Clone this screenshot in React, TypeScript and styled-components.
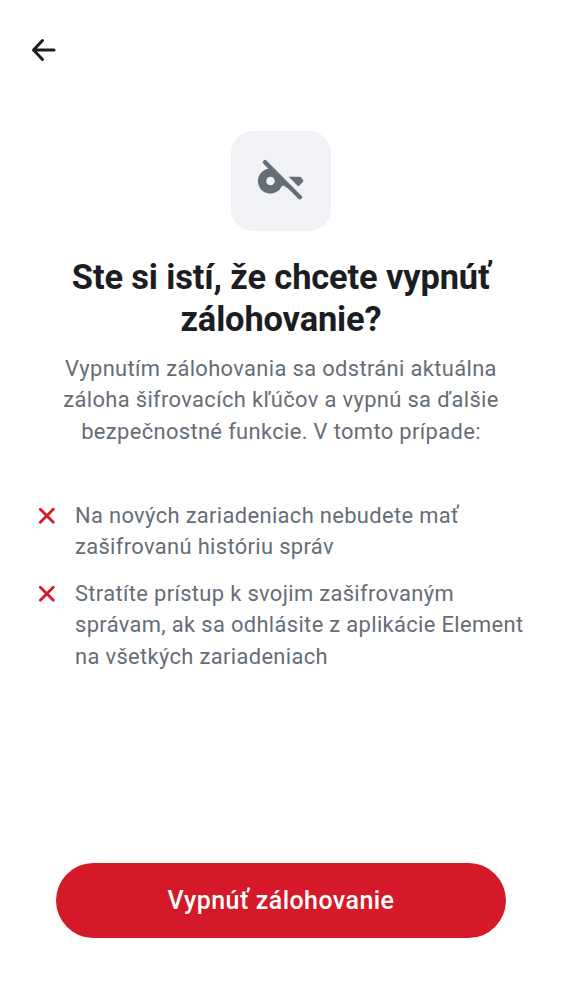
import React from "react";
import styled, { createGlobalStyle } from "styled-components";

const GlobalStyle = createGlobalStyle`
  * { box-sizing: border-box; }
  body { margin: 0; background: #fff; font-family: Roboto, sans-serif; }
`;

const Screen = styled.main`
  display: flex;
  flex-direction: column;
  width: 562px;
  height: 1000px;
  padding: 31px 31px 62px;
  background: #fff;
`;

const BackButton = styled.button`
  display: flex;
  width: 38px;
  height: 38px;
  padding: 0;
  margin-left: -6px;
  border: 0;
  background: none;
  color: #1b1d22;
`;

const Header = styled.header`
  display: flex;
  flex-direction: column;
  align-items: center;
  margin-top: 62px;
  text-align: center;
`;

const IconTile = styled.div`
  display: grid;
  place-items: center;
  width: 100px;
  height: 100px;
  border-radius: 22px;
  background: #f0f2f5;
  color: #656d77;
`;

const Title = styled.h1`
  margin: 25px 0 0;
  font-size: 34.4px;
  line-height: 42px;
  letter-spacing: -0.12px;
  font-weight: 700;
  color: #1b1d22;
  white-space: nowrap;
`;

const Description = styled.p`
  margin: 13px 0 0;
  font-size: 21.9px;
  line-height: 31.3px;
  letter-spacing: 0.36px;
  color: #656d77;
  white-space: nowrap;
`;

const List = styled.ul`
  display: flex;
  flex-direction: column;
  gap: 15.6px;
  margin: 53.1px 0 0;
  padding: 0;
  list-style: none;
`;

const Item = styled.li`
  display: flex;
  gap: 13px;
  font-size: 21.9px;
  line-height: 31.3px;
  letter-spacing: 0.35px;
  color: #656d77;
  white-space: nowrap;
`;

const Cross = styled.svg`
  flex: none;
  width: 31px;
  height: 31px;
  color: #d51928;
`;

const DangerButton = styled.button`
  width: 450px;
  height: 75px;
  margin: auto auto 0;
  padding: 0;
  border: 0;
  border-radius: 38px;
  background: #d51928;
  color: #fff;
  font: 500 25px/38px Roboto, sans-serif;
  letter-spacing: 0.43px;
`;

const reasons = [
  ["Na nových zariadeniach nebudete mať", "zašifrovanú históriu správ"],
  ["Stratíte prístup k svojim zašifrovaným", "správam, ak sa odhlásite z aplikácie Element", "na všetkých zariadeniach"],
];

const Lines = ({ lines }: { lines: string[] }) => (
  <span>{lines.map((line, i) => <React.Fragment key={line}>{i > 0 && <br />}{line}</React.Fragment>)}</span>
);

export default function App() {
  return (
    <Screen>
      <GlobalStyle />
      <BackButton aria-label="Späť">
        <svg width="38" height="38" viewBox="0 0 38 38" fill="none" stroke="currentColor" strokeWidth="3" strokeLinecap="round" strokeLinejoin="round">
          <path d="M17.5 9.5 8.5 19l9 9.5M9 19h20" />
        </svg>
      </BackButton>
      <Header>
        <IconTile>
          <svg width="50" height="50" viewBox="0 0 50 50" fill="currentColor">
            <path fillRule="evenodd" d="M15.8 12.6A12.5 12.5 0 1 0 26 29.7H28.3L30.4 31.7 32.5 31 34.5 32 35 32ZM14.5 20.7a4.3 4.3 0 1 1 0 8.6 4.3 4.3 0 0 1 0-8.6Z" />
            <path d="M32.7 20.8H43.5Q44.5 20.8 45.2 21.6L47 23.9Q47.6 24.8 47 25.7L42.4 30.5Z" />
            <path d="m9 6.2 34.9 35.1" stroke="currentColor" strokeWidth="4.4" strokeLinecap="round" />
          </svg>
        </IconTile>
        <Title>Ste si istí, že chcete vypnúť<br />zálohovanie?</Title>
        <Description>
          <Lines lines={["Vypnutím zálohovania sa odstráni aktuálna", "záloha šifrovacích kľúčov a vypnú sa ďalšie", "bezpečnostné funkcie. V tomto prípade:"]} />
        </Description>
      </Header>
      <List>
        {reasons.map((lines) => (
          <Item key={lines[0]}>
            <Cross viewBox="0 0 31 31" fill="none" stroke="currentColor" strokeWidth="2.8" strokeLinecap="round">
              <path d="m9.3 9.3 13 13M22.3 9.3l-13 13" />
            </Cross>
            <Lines lines={lines} />
          </Item>
        ))}
      </List>
      <DangerButton>Vypnúť zálohovanie</DangerButton>
    </Screen>
  );
}
